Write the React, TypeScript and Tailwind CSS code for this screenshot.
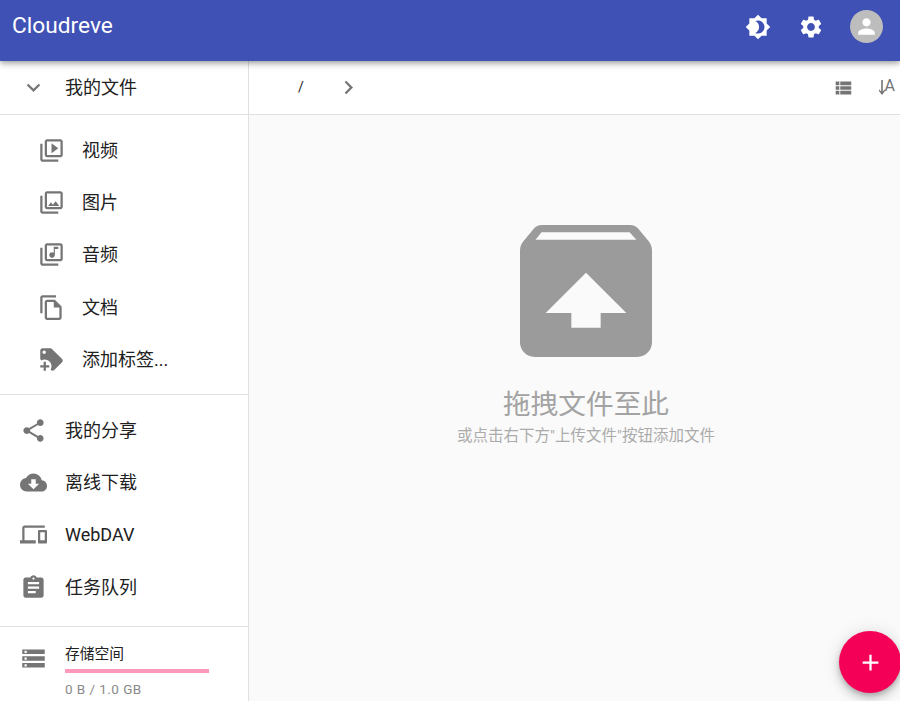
import React from 'react';

const paths = {
  expand: 'M16.59 8.59L12 13.17 7.41 8.59 6 10l6 6 6-6z',
  next: 'M10 6L8.59 7.41 13.17 12l-4.58 4.59L10 18l6-6z',
  video: 'M4 6H2v14c0 1.1.9 2 2 2h14v-2H4V6zm16-4H8c-1.1 0-2 .9-2 2v12c0 1.1.9 2 2 2h12c1.1 0 2-.9 2-2V4c0-1.1-.9-2-2-2zm0 14H8V4h12v12zM12 5.5v9l6-4.5z',
  photo: 'M20 4v12H8V4h12m0-2H8c-1.1 0-2 .9-2 2v12c0 1.1.9 2 2 2h12c1.1 0 2-.9 2-2V4c0-1.1-.9-2-2-2zm-8.5 9.67l1.69 2.26 2.48-3.1L19 15H9zM2 6v14c0 1.1.9 2 2 2h14v-2H4V6H2z',
  music: 'M20 2H8c-1.1 0-2 .9-2 2v12c0 1.1.9 2 2 2h12c1.1 0 2-.9 2-2V4c0-1.1-.9-2-2-2zm0 14H8V4h12v12zm-7.5-1c1.38 0 2.5-1.12 2.5-2.5V7h3V5h-4v5.51c-.42-.32-.93-.51-1.5-.51-1.38 0-2.5 1.12-2.5 2.5s1.12 2.5 2.5 2.5zM2 6v14c0 1.1.9 2 2 2h14v-2H4V6H2z',
  doc: 'M16 1H4c-1.1 0-2 .9-2 2v14h2V3h12V1zm-1 4H8c-1.1 0-2 .9-2 2v14c0 1.1.9 2 2 2h11c1.1 0 2-.9 2-2V11l-6-6zM8 21V7h6v5h5v9H8z',
  tagPlus: 'M21.41 11.58L12.41 2.58C12.05 2.22 11.55 2 11 2H4C2.9 2 2 2.9 2 4V11C2 11.55 2.22 12.05 2.59 12.42L3 12.82C3.9 12.3 4.94 12 6 12C9.31 12 12 14.69 12 18C12 19.06 11.7 20.1 11.18 21L11.58 21.41C11.95 21.78 12.45 22 13 22C13.55 22 14.05 21.78 14.41 21.41L21.41 14.41C21.78 14.05 22 13.55 22 13C22 12.45 21.78 11.95 21.41 11.58M5.5 7C4.67 7 4 6.33 4 5.5C4 4.67 4.67 4 5.5 4C6.33 4 7 4.67 7 5.5C7 6.33 6.33 7 5.5 7M10 19H7V22H5V19H2V17H5V14H7V17H10V19Z',
  share: 'M18 16.08c-.76 0-1.44.3-1.96.77L8.91 12.7c.05-.23.09-.46.09-.7s-.04-.47-.09-.7l7.05-4.11c.54.5 1.25.81 2.04.81 1.66 0 3-1.34 3-3s-1.34-3-3-3-3 1.34-3 3c0 .24.04.47.09.7L8.04 9.81C7.5 9.31 6.79 9 6 9c-1.66 0-3 1.34-3 3s1.34 3 3 3c.79 0 1.5-.31 2.04-.81l7.12 4.16c-.05.21-.08.43-.08.65 0 1.61 1.31 2.92 2.92 2.92 1.61 0 2.92-1.31 2.92-2.92s-1.31-2.92-2.92-2.92z',
  cloud: 'M19.35 10.04C18.67 6.59 15.64 4 12 4 9.11 4 6.6 5.64 5.35 8.04 2.34 8.36 0 10.91 0 14c0 3.31 2.69 6 6 6h13c2.76 0 5-2.24 5-5 0-2.64-2.05-4.78-4.65-4.96zM17 13l-5 5-5-5h3V9h4v4h3z',
  devices: 'M4 6h18V4H4c-1.1 0-2 .9-2 2v11H0v3h14v-3H4V6zm19 2h-6c-.55 0-1 .45-1 1v10c0 .55.45 1 1 1h6c.55 0 1-.45 1-1V9c0-.55-.45-1-1-1zm-1 9h-4v-7h4v7z',
  task: 'M19 3h-4.18C14.4 1.84 13.3 1 12 1c-1.3 0-2.4.84-2.82 2H5c-1.1 0-2 .9-2 2v14c0 1.1.9 2 2 2h14c1.1 0 2-.9 2-2V5c0-1.1-.9-2-2-2zm-7 0c.55 0 1 .45 1 1s-.45 1-1 1-1-.45-1-1 .45-1 1-1zm2 14H7v-2h7v2zm3-4H7v-2h10v2zm0-4H7V7h10v2z',
  storage: 'M2 20h20v-4H2v4zm2-3h2v2H4v-2zM2 4v4h20V4H2zm4 3H4V5h2v2zm-4 7h20v-4H2v4zm2-3h2v2H4v-2z',
  theme: 'M20 8.69V4h-4.69L12 .69 8.69 4H4v4.69L.69 12 4 15.31V20h4.69L12 23.31 15.31 20H20v-4.69L23.31 12 20 8.69zM12 18c-.89 0-1.74-.2-2.5-.55C11.56 16.5 13 14.42 13 12s-1.44-4.5-3.5-5.45C10.26 6.2 11.11 6 12 6c3.31 0 6 2.69 6 6s-2.69 6-6 6z',
  settings: 'M19.14 12.94c.04-.3.06-.61.06-.94 0-.32-.02-.64-.07-.94l2.03-1.58c.18-.14.23-.41.12-.61l-1.92-3.32c-.12-.22-.37-.29-.59-.22l-2.39.96c-.5-.38-1.03-.7-1.62-.94l-.36-2.54c-.04-.24-.24-.41-.48-.41h-3.84c-.24 0-.43.17-.47.41l-.36 2.54c-.59.24-1.13.57-1.62.94l-2.39-.96c-.22-.08-.47 0-.59.22L2.74 8.87c-.12.21-.08.47.12.61l2.03 1.58c-.05.3-.09.63-.09.94s.02.64.07.94l-2.03 1.58c-.18.14-.23.41-.12.61l1.92 3.32c.12.22.37.29.59.22l2.39-.96c.5.38 1.03.7 1.62.94l.36 2.54c.05.24.24.41.48.41h3.84c.24 0 .44-.17.47-.41l.36-2.54c.59-.24 1.13-.56 1.62-.94l2.39.96c.22.08.47 0 .59-.22l1.92-3.32c.12-.22.07-.47-.12-.61l-2.01-1.58zM12 15.6c-1.98 0-3.6-1.62-3.6-3.6s1.62-3.6 3.6-3.6 3.6 1.62 3.6 3.6-1.62 3.6-3.6 3.6z',
  person: 'M12 12c2.21 0 4-1.79 4-4s-1.79-4-4-4-4 1.79-4 4 1.79 4 4 4zm0 2c-2.67 0-8 1.34-8 4v2h16v-2c0-2.66-5.33-4-8-4z',
  list: 'M4 14h4v-4H4v4zm0 5h4v-4H4v4zM4 9h4V5H4v4zm5 5h12v-4H9v4zm0 5h12v-4H9v4zM9 5v4h12V5H9z',
  add: 'M19 13h-6v6h-2v-6H5v-2h6V5h2v6h6v2z',
  unarchive: 'M20.55 5.22l-1.39-1.68C18.88 3.21 18.47 3 18 3H6c-.47 0-.88.21-1.15.55L3.46 5.22C3.17 5.57 3 6.01 3 6.5V19c0 1.1.89 2 2 2h14c1.1 0 2-.9 2-2V6.5c0-.49-.17-.93-.45-1.28zM12 9.5l5.5 5.5H14v2h-4v-2H6.5L12 9.5zM5.12 5l.82-1h12l.93 1H5.12z',
};

type IconName = keyof typeof paths;

const Icon = ({ name, className }: { name: IconName; className: string }) => (
  <svg viewBox="0 0 24 24" className={`shrink-0 fill-current ${className}`}>
    <path d={paths[name]} />
  </svg>
);

const subItems: { icon: IconName; label: string }[] = [
  { icon: 'video', label: '视频' },
  { icon: 'photo', label: '图片' },
  { icon: 'music', label: '音频' },
  { icon: 'doc', label: '文档' },
  { icon: 'tagPlus', label: '添加标签...' },
];

const navItems: { icon: IconName; label: string }[] = [
  { icon: 'share', label: '我的分享' },
  { icon: 'cloud', label: '离线下载' },
  { icon: 'devices', label: 'WebDAV' },
  { icon: 'task', label: '任务队列' },
];

const Sidebar = () => (
  <aside className="flex w-[249px] shrink-0 flex-col border-r border-[#e0e0e0] bg-white">
    <div className="box-content flex h-[53px] items-center border-b border-[#e0e0e0] pl-[20px]">
      <Icon name="expand" className="h-[27px] w-[27px] text-[#757575]" />
      <span className="ml-[18px] text-[18px] text-[#212121]">我的文件</span>
    </div>
    <div className="pt-[9px] pb-[8px]">
      {subItems.map((item) => (
        <div key={item.label} className="flex h-[52.4px] items-center pl-[38px]">
          <Icon name={item.icon} className="h-[27px] w-[27px] text-[#757575]" />
          <span className="ml-[17px] text-[18px] text-[#212121]">{item.label}</span>
        </div>
      ))}
    </div>
    <div className="border-t border-[#e0e0e0] pt-[9px] pb-[12.4px]">
      {navItems.map((item) => (
        <div key={item.label} className="flex h-[52.4px] items-center pl-[20px]">
          <Icon name={item.icon} className="h-[27px] w-[27px] text-[#757575]" />
          <span className="ml-[18px] text-[18px] text-[#212121]">{item.label}</span>
        </div>
      ))}
    </div>
    <div className="flex border-t border-[#e0e0e0] pt-[18px] pl-[20px]">
      <Icon name="storage" className="h-[27px] w-[27px] text-[#757575]" />
      <div className="ml-[18px] w-[144px]">
        <div className="h-[18px] text-[14.75px] leading-[18px] text-[#212121]">存储空间</div>
        <div className="mt-[6px] h-[4px] w-full bg-[#ff99bc]" />
        <div className="mt-[7px] text-[13.5px] leading-[18px] tracking-[0.45px] text-[#8a8a8a]">0 B / 1.0 GB</div>
      </div>
    </div>
  </aside>
);

const Toolbar = () => (
  <div className="flex h-[54px] shrink-0 items-center border-b border-[#e0e0e0] bg-white text-[#757575]">
    <span className="ml-[49px] text-[14px] text-[#212121]">/</span>
    <Icon name="next" className="ml-[31px] h-[27px] w-[27px]" />
    <Icon name="list" className="ml-auto h-[22px] w-[22px]" />
    <div className="mr-[5px] ml-[25px] flex items-start">
      <svg viewBox="0 0 6 15" className="h-[15px] w-[6px] fill-current">
        <path d="M2.2 0h1.6v11.5L6 9.3V11l-3 4-3-4V9.3l2.2 2.2z" />
      </svg>
      <span className="-mt-[3px] text-[16px] leading-[18px]">A</span>
    </div>
  </div>
);

export default function App() {
  return (
    <div className="relative flex h-[701px] w-[900px] flex-col overflow-hidden font-['Roboto','Noto_Sans_CJK_SC',sans-serif]">
      <header className="relative z-10 flex h-[61px] shrink-0 items-center bg-[#3f51b5] pb-[8px] pl-[12px] text-white shadow-[0_2px_4px_-1px_rgba(0,0,0,0.2),0_4px_5px_0_rgba(0,0,0,0.14),0_1px_10px_0_rgba(0,0,0,0.12)]">
        <span className="mb-[2px] text-[22.7px] leading-[32px]">Cloudreve</span>
        <Icon name="theme" className="ml-auto h-[26px] w-[26px]" />
        <Icon name="settings" className="ml-[27px] h-[26px] w-[26px]" />
        <div className="mr-[17px] ml-[26px] flex h-[33px] w-[33px] items-center justify-center rounded-full bg-[#bdbdbd]">
          <Icon name="person" className="h-[25px] w-[25px]" />
        </div>
      </header>

      <div className="flex min-h-0 flex-1">
        <Sidebar />
        <main className="flex min-w-0 flex-1 flex-col bg-[#fafafa]">
          <Toolbar />
          <div className="flex flex-col items-center pt-[88px] pl-[23px]">
            <Icon name="unarchive" className="h-[176px] w-[176px] text-[#9b9b9b]" />
            <div className="mt-[6px] text-[27.7px] leading-[40px] text-[#a3a3a3]">拖拽文件至此</div>
            <div className="text-[15.5px] leading-[22px] text-[#ababab]">或点击右下方"上传文件"按钮添加文件</div>
          </div>
        </main>
      </div>

      <button className="absolute top-[631px] left-[839px] flex h-[62px] w-[62px] items-center justify-center rounded-full bg-[#f50057] text-white shadow-[0_3px_5px_-1px_rgba(0,0,0,0.2),0_6px_10px_0_rgba(0,0,0,0.14),0_1px_18px_0_rgba(0,0,0,0.12)]">
        <Icon name="add" className="h-[27px] w-[27px]" />
      </button>
    </div>
  );
}
